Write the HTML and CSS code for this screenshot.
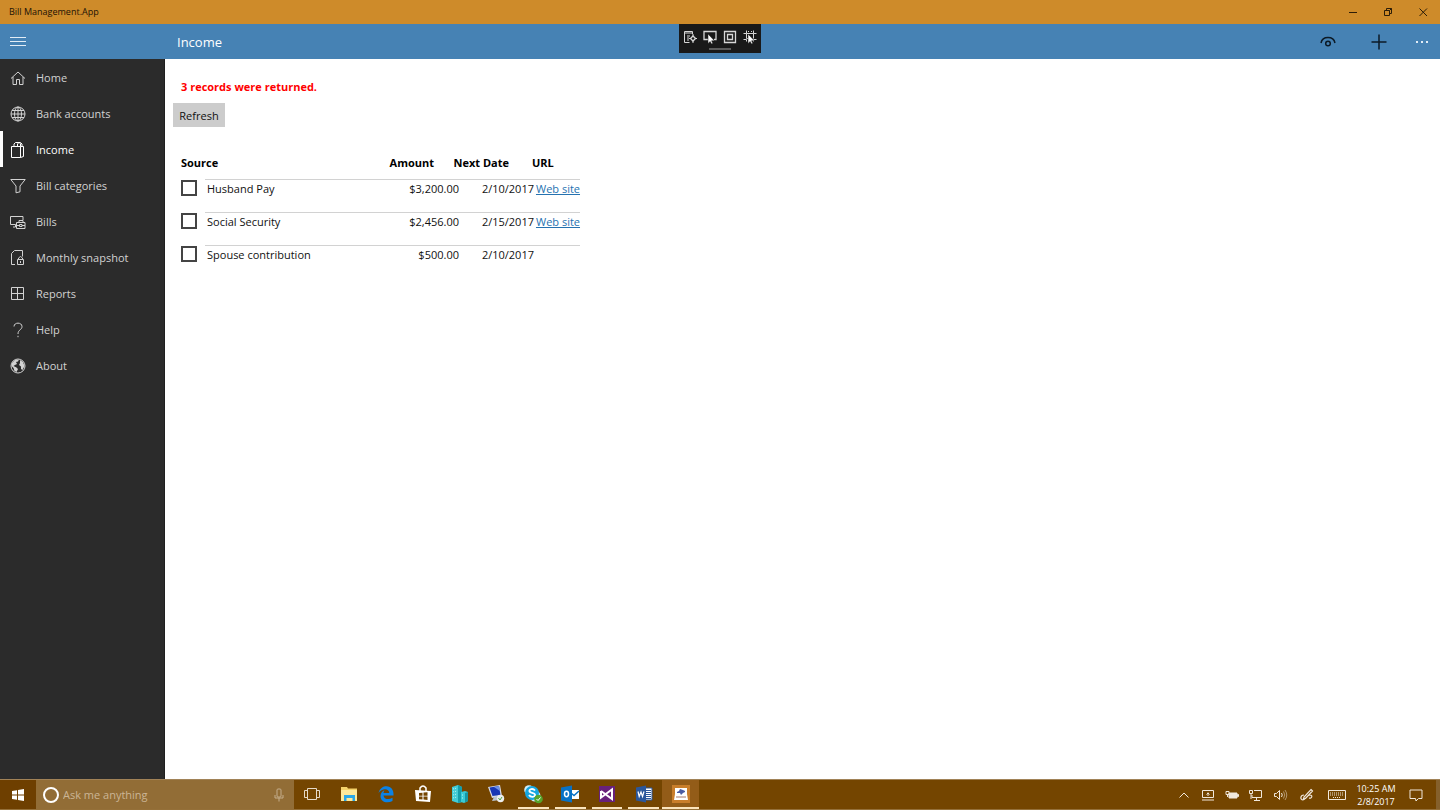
FILE: index.html
```html
<!DOCTYPE html>
<html lang="en">
<head>
<meta charset="utf-8">
<title>Bill Management.App</title>
<link rel="stylesheet" href="styles.css">
</head>
<body>
<div class="titlebar">
  <span class="app-name">Bill Management.App</span>
  <div class="window-buttons">
    <button aria-label="Minimize"><svg width="10" height="10" viewBox="0 0 10 10"><path d="M1 5.500h8"/></svg></button>
    <button aria-label="Restore"><svg width="10" height="10" viewBox="0 0 10 10"><path d="M1.500 3.500h5v5h-5zM3.500 3v-1.500h5v5h-1.500M6.500 3.500l2-2"/></svg></button>
    <button aria-label="Close"><svg width="10" height="10" viewBox="0 0 10 10"><path d="M1.500 1.500l7.500 7.500M9 1.500l-7.500 7.500"/></svg></button>
  </div>
</div>
<header class="header">
  <button class="menu-button" aria-label="Menu"><svg width="16" height="12" viewBox="0 0 16 12"><path d="M0 1.500h16M0 5.500h16M0 9.500h16"/></svg></button>
  <h1>Income</h1>
  <div class="commands">
    <button aria-label="View"><svg width="18" height="18" viewBox="0 0 18 18"><path d="M2 10C3.500 2.800 14.500 2.800 16 10"/><circle cx="9" cy="10.500" r="2.300"/></svg></button>
    <button aria-label="Add"><svg width="18" height="18" viewBox="0 0 18 18"><path d="M9 1.500v15M1.500 9h15"/></svg></button>
    <button class="more" aria-label="More"><svg width="14" height="4" viewBox="0 0 14 4"><path d="M1 1h2v2H1zM6 1h2v2H6zM11 1h2v2h-2z"/></svg></button>
  </div>
</header>
<div class="debug-bar">
  <div class="debug-icons">
    <button aria-label="Go to live visual tree"><svg width="14" height="14" viewBox="0 0 14 14"><path d="M6.500 12.500h-5v-11h8V4M1.500 3h8M4 6h3M4 8h2M4 10h2M10 4v2M10 11v2M6 8.500h1.500M12.500 8.500H14"/><path stroke-width="1.400" d="M10 6l2.500 2.500L10 11 7.500 8.500z"/></svg></button>
    <button aria-label="Enable selection"><svg width="14" height="14" viewBox="0 0 14 14"><path stroke-width="1.300" d="M5 9.500H1v-8h12v8h-2"/><path class="solid" d="M5 4v9.500l2.200-2 1.300 2.500 1.300-.7-1.200-2.500H11.500z"/></svg></button>
    <button aria-label="Display layout adorners"><svg width="14" height="14" viewBox="0 0 14 14"><path stroke-width="1.300" d="M1.500 1.500h11v11h-11zM4.500 4.500h5v5h-5z"/></svg></button>
    <button aria-label="Track focused element"><svg width="14" height="14" viewBox="0 0 14 14"><path d="M3.500 3.500h7v5M5 8.500H3.500v-5M.5 3.500h3v-3M13.500 3.500h-3v-3M.5 9.500h3v2M13.500 9.500h-3v2M5 1.500h1M8 1.500h1"/><path class="solid" d="M5 4v9.500l2.200-2 1.300 2.500 1.300-.7-1.200-2.500H11.500z"/></svg></button>
  </div>
  <span class="debug-grip"></span>
</div>
<div class="body">
  <nav class="sidebar">
    <a href="#home"><svg viewBox="0 0 16 16"><path d="M1 8.500L8 2l7 6.500M3 7v7.500h3.500V9.500h3v5H13V7"/></svg>Home</a>
    <a href="#accounts"><svg viewBox="0 0 16 16"><circle cx="8" cy="8" r="7"/><ellipse cx="8" cy="8" rx="3.500" ry="7"/><path d="M1 8h14M2 4.500h12M2 11.500h12M8 1v14"/></svg>Bank accounts</a>
    <a href="#income" class="current" aria-current="page"><svg viewBox="0 0 16 16"><path d="M1.500 4.500h9v11h-9zM10.500 4.500h3v10l-3 1M4 4.500V2l1.500-1.500h4L10.500 2v2.500M7.500 4.500V2L9 .5h1.500L12 2v2.500"/></svg>Income</a>
    <a href="#categories"><svg viewBox="0 0 16 16"><path d="M.8 1.500h14.400L10 8v5.800l-4 1V8z"/></svg>Bill categories</a>
    <a href="#bills"><svg viewBox="0 0 16 16"><path d="M5.500 10.500H.5v-8h12.500v3.500M3 13h2.500v-2.500M6.500 8.500h8.500v6H6.500zM9 8.500V6.500h4v2M6.500 11.500h3M12 11.500h3M9.500 10.500h2.500v2H9.500z"/></svg>Bills</a>
    <a href="#snapshot"><svg viewBox="0 0 16 16"><path d="M5 14.500H1.500V3.500l3-3h8v6M7.500 9.500h6v5h-6zM8.500 9.500V8q2-3 4 0v1.500M10.500 11v2"/></svg>Monthly snapshot</a>
    <a href="#reports"><svg viewBox="0 0 16 16"><path d="M1.500 1.500h12v12h-12zM7.500 1.500v12M1.500 7.500h12"/></svg>Reports</a>
    <a href="#help"><svg viewBox="0 0 16 16"><path d="M4 4.500C4 0 12 0 12 4.500 12 8 8 7.500 8 12M8 13.800v1.400"/></svg>Help</a>
    <a href="#about"><svg viewBox="0 0 16 16"><circle cx="8" cy="8" r="7"/><path class="solid" d="M2 5l3-3 4-.5-1 2-2 .5 1 2-2 1-1.500 1 3 1.500 1.500 1.500-1.500 3-2-1-1-3-2-2zM10 2l3 2 1.500 4-2 4-1.500-1V8.500L9 7l1-2z"/></svg>About</a>
  </nav>
  <main class="content">
    <p class="message">3 records were returned.</p>
    <button class="refresh">Refresh</button>
    <table class="income">
      <colgroup><col class="c-check"><col class="c-source"><col class="c-amount"><col class="c-gap"><col class="c-date"><col class="c-gap"><col class="c-url"></colgroup>
      <thead>
        <tr><th colspan="2">Source</th><th class="num">Amount</th><th class="num" colspan="2">Next Date</th><th class="url" colspan="2">URL</th></tr>
      </thead>
      <tbody>
        <tr><td class="check"><input type="checkbox" id="r1"></td><td><label for="r1">Husband Pay</label></td><td class="num" colspan="2">$3,200.00</td><td class="num" colspan="2">2/10/2017</td><td class="num"><a href="#site1">Web site</a></td></tr>
        <tr><td class="check"><input type="checkbox" id="r2"></td><td><label for="r2">Social Security</label></td><td class="num" colspan="2">$2,456.00</td><td class="num" colspan="2">2/15/2017</td><td class="num"><a href="#site2">Web site</a></td></tr>
        <tr><td class="check"><input type="checkbox" id="r3"></td><td><label for="r3">Spouse contribution</label></td><td class="num" colspan="2">$500.00</td><td class="num" colspan="2">2/10/2017</td><td></td></tr>
      </tbody>
    </table>
  </main>
</div>
<footer class="taskbar">
  <button class="start" aria-label="Start"><svg width="14" height="14" viewBox="0 0 14 14" fill="#fff"><path d="M1 3l5-.8v4.300H1zM7 2l6-1v5.500H7zM1 7.500h5v4.300L1 11zM7 7.500h6V13l-6-1z"/></svg></button>
  <div class="search">
    <svg width="18" height="18" viewBox="0 0 18 18" fill="none" stroke="#fff" stroke-width="2"><circle cx="9" cy="9" r="7"/></svg>
    <input type="text" placeholder="Ask me anything" aria-label="Ask me anything">
    <svg width="12" height="14" viewBox="0 0 12 14" fill="none" stroke="#c4ae8c"><rect x="4" y="1" width="4" height="8" rx="1"/><path d="M2 7v3h8V7M6 10v3.500"/></svg>
  </div>
  <div class="apps">
    <button aria-label="Task view"><svg viewBox="0 0 20 20" fill="none" stroke="#e6dac9"><path d="M5.500 4.500h9v11h-9zM5 6.500H2.500v7H5M15 6.500h2.500v7H15"/></svg></button>
    <button aria-label="File Explorer"><svg viewBox="0 0 20 20"><path fill="#f5d36b" d="M2 3h6l1 1.500h9V16H2z"/><path fill="#ffe99a" d="M2 6h16v11H2z"/><path fill="#2ba8e8" d="M5 11h11v6h-2.500v-3h-6v3H5z"/></svg></button>
    <button aria-label="Edge"><svg viewBox="0 0 20 20"><path fill="#0b82e4" d="M2.500 9C4 3.500 8 2 10.500 2.200 15 2.200 18 6 17.500 11.500H7.500c.3 4 5.500 4.500 9 2.300v3.200c-5 2.500-12 1.500-12-5 0-3 2-5 4-5.700C7.800 7 7.500 8.500 7.500 9h5.800C13 4 6 4 2.500 9z"/></svg></button>
    <button aria-label="Store"><svg viewBox="0 0 20 20"><path fill="none" stroke="#fff" stroke-width="1.500" d="M7 7V4q3-4 6 0v3"/><path fill="#fff" d="M2 6l16 1-1 11-14-1z"/><path fill="#744500" d="M6 9l3.500-.3v3H6zM10.500 8.600l4-.3v3.400h-4zM6 12.500h3.500v3L6 15.200zM10.500 12.500h4V16l-4-.4z"/></svg></button>
    <button aria-label="Server"><svg viewBox="0 0 20 20"><path fill="#41ccd6" d="M2 3l6-2 4 2v15l-4 1-6-2z"/><path fill="#159eac" d="M8 1l4 2v15l-4 1z"/><path fill="#38cad5" d="M11 8l4-1 3 1v9l-4 2-3-1z"/><path fill="#1797a3" d="M15 9l3-1v9l-3 1.500z"/><path stroke="#c0f5f4" stroke-dasharray="1 1" fill="none" d="M3 5l4-1M3 8l4-1M3 11l4-1M3 14l4-1M12 11h2M12 14h2"/></svg></button>
    <button aria-label="Remote Desktop"><svg viewBox="0 0 20 20"><path fill="#d8dce5" d="M2 3l12-2 2 11-10 2z"/><path fill="#1837b5" d="M3.500 3.500l9.500-1.500 1.500 9-8 1z"/><path fill="#6c91e7" d="M8 3l5-1 1 5z"/><path fill="#bbc6d3" d="M8 13l4-1 2 4-8 1z"/><circle cx="14.500" cy="14.500" r="3.700" fill="#eee"/><path d="M12.500 14l1.500 2 2-3" stroke="#49a54a" fill="none"/></svg></button>
    <button class="open" aria-label="Skype"><svg viewBox="0 0 20 20"><circle cx="6" cy="6" r="4.800" fill="#cceefe"/><circle cx="12" cy="12" r="5.500" fill="#cceefe"/><circle cx="9" cy="9" r="7" fill="#16a6df"/><path d="M12 6.500C10 4 5.500 5 6.500 7.500c.8 1.700 5 1 5.500 3 .5 3-4.500 3-6 .5" stroke="#fff" stroke-width="1.800" fill="none"/><circle cx="15.500" cy="15" r="4.300" fill="#55a52b"/><path d="M13.500 15l1.500 1.500 2.500-3" stroke="#fff" fill="none"/></svg></button>
    <button class="open" aria-label="Outlook"><svg viewBox="0 0 20 20"><path fill="#fff" d="M11 6h8v9h-8z"/><path stroke="#0872c5" stroke-width="1.500" fill="none" d="M11 9l3 2.500L19 7"/><path fill="#0872c5" d="M1 3.500L12 1.500v17L1 16.500z"/><ellipse cx="6.500" cy="10" rx="2" ry="2.700" stroke="#fff" stroke-width="1.500" fill="none"/></svg></button>
    <button class="open" aria-label="Visual Studio"><svg viewBox="0 0 20 20"><path fill="#68217a" d="M2 2h16v16H2z"/><path d="M4 7v6.500l11-8v9.500L4 7" stroke="#fff" stroke-width="2" fill="none"/></svg></button>
    <button class="open" aria-label="Word"><svg viewBox="0 0 20 20"><path fill="#fff" stroke="#2b579a" d="M11 4h7v12h-7z"/><path stroke="#2b579a" d="M12 6.500h5M12 8.500h5M12 10.500h5M12 12.500h5M12 14.500h5"/><path fill="#2b579a" d="M2 3.500L12 1.500v17L2 16.500z"/><path d="M4 7.500l1.200 5L7 8l1.500 4.500 1.500-5" stroke="#fff" stroke-width="1.200" fill="none"/></svg></button>
    <button class="open active" aria-label="Bill Management"><svg viewBox="0 0 20 20"><path fill="#c97e2b" d="M1 1h18v18H1z"/><path fill="#fff" d="M4 4h12v6l1 6H3l1-6z"/><path fill="#4b5ca3" d="M6 8l2-1 1-2 3 1 2 1v1l-2 1-2 2-1-2H6z"/><path stroke="#a6786b" d="M5 13h10"/></svg></button>
  </div>
  <div class="tray">
    <svg width="24" height="16" viewBox="0 0 24 16"><path d="M7.500 10.500L12 6l4.500 4.500"/></svg>
    <svg width="24" height="16" viewBox="0 0 24 16"><path d="M6.500 3.500h11v7h-11zM6 13h12M12 9V5.500M10.500 7.500L12 6l1.500 1.500"/></svg>
    <svg width="24" height="16" viewBox="0 0 24 16"><path fill="#f1e8dc" d="M9 6h8v5H9zM17.500 7.500h1v2h-1z"/><path d="M6 4.500h3v3H6zM7.500 8v2"/></svg>
    <svg width="24" height="16" viewBox="0 0 24 16"><path d="M10 3.500h7.500v7H8V8M12.500 10.500v3M10 13.500h6M5.500 3.500h3v3h-3zM7 7v5"/></svg>
    <svg width="24" height="16" viewBox="0 0 24 16"><path d="M6.500 6.500h2l3-3v9l-3-3h-2zM13.500 6q1.500 2 0 4"/><path opacity=".5" d="M15.500 4.500q2.500 3.500 0 7M17 3q3.500 5 0 10"/></svg>
    <svg width="30" height="16" viewBox="0 0 30 16"><path stroke-width="1.200" d="M19 2.500l1.500 1.500-7 7.500-2 .5.500-2zM12 8c-4 0-4 5-1 5s3-5 7-5c3 0 2 4-1 3"/></svg>
    <svg width="30" height="16" viewBox="0 0 30 16"><path d="M6.500 3.500h17v9h-17z"/><path stroke-dasharray="1 1" d="M8 6h14M8 8h14M11 10.500h8"/></svg>
    <time datetime="2017-02-08T10:25"><span>10:25 AM</span><span>2/8/2017</span></time>
    <button aria-label="Notifications"><svg width="14" height="14" viewBox="0 0 14 14"><path d="M1 2h12v8.500H9.500L7 13l-.5-2.500H1z"/></svg></button>
  </div>
</footer>
</body>
</html>
```
FILE: styles.css
```css
* { box-sizing: border-box; }
body {
  margin: 0;
  min-height: 100vh;
  display: flex;
  flex-direction: column;
  background: #fff;
  color: #111;
  font: 11px/16px "Open Sans", "Noto Sans", sans-serif;
}
button {
  display: flex;
  align-items: center;
  justify-content: center;
  padding: 0;
  border: 0;
  background: none;
  font: inherit;
  color: inherit;
}
svg { display: block; flex: none; }
.titlebar {
  height: 24px;
  display: flex;
  align-items: center;
  justify-content: space-between;
  padding-left: 9px;
  background: #ce8b2a;
  color: #1c1206;
}
.app-name { font-size: 9px; }
.window-buttons { display: flex; height: 100%; }
.window-buttons button { width: 35px; }
.window-buttons svg { fill: none; stroke: #2c1d08; }
.header {
  height: 35px;
  display: flex;
  align-items: center;
  background: #4682b4;
  color: #fff;
}
.menu-button { width: 36px; height: 100%; }
.menu-button svg { stroke: #e2edf6; }
.header h1 {
  flex: 1;
  margin: 0;
  padding-left: 141px;
  font-size: 13px;
  line-height: 18px;
  font-weight: 400;
}
.commands { display: flex; height: 100%; }
.commands button { width: 51px; }
.commands svg { fill: none; stroke: #0c1a26; stroke-width: 1.5; }
.commands .more { width: 36px; }
.commands .more svg { fill: #e2edf6; stroke: none; }
.debug-bar {
  position: absolute;
  top: 24px;
  left: 50%;
  transform: translateX(-50%);
  width: 82px;
  height: 29px;
  padding: 6px 0 3px;
  display: flex;
  flex-direction: column;
  justify-content: space-between;
  align-items: center;
  background: #191919;
}
.debug-icons { display: flex; gap: 6px; }
.debug-icons svg { fill: none; stroke: #d6d6d6; }
.debug-icons .solid { fill: #fff; stroke: #191919; stroke-width: .5; }
.debug-grip { width: 22px; height: 2px; background: #5c5c5c; }
.body { flex: 1; display: flex; }
.sidebar {
  width: 165px;
  background: #2b2b2b;
  border-right: 1px solid #1f1f1f;
}
.sidebar a {
  display: flex;
  align-items: center;
  gap: 10px;
  height: 36px;
  padding: 2px 0 0 7px;
  border-left: 3px solid transparent;
  color: #d2d2d2;
  text-decoration: none;
}
.sidebar .current { border-color: #fff; color: #fff; }
.sidebar svg { width: 16px; height: 16px; fill: none; stroke: currentColor; }
.sidebar .solid { fill: currentColor; stroke: none; }
.content { flex: 1; padding: 20px 8px; }
.message { margin: 0 0 8px; padding-left: 8px; color: #f00; font-weight: 700; }
.refresh { width: 52px; height: 24px; padding-top: 2px; background: #ccc; }
.income {
  width: 399px;
  margin: 24px 0 0 8px;
  table-layout: fixed;
  border-collapse: separate;
  border-spacing: 0;
  white-space: nowrap;
}
.c-check { width: 24px; }
.c-source { width: 175px; }
.c-amount { width: 54px; }
.c-gap { width: 25px; }
.c-date { width: 50px; }
.c-url { width: 46px; }
.income th { height: 28px; padding: 4px 0 8px; text-align: left; vertical-align: top; color: #000; }
.income td { height: 33px; padding: 1px 0 0; vertical-align: top; border-top: 1px solid #d2d2d2; }
.income td:nth-child(2) { padding-left: 2px; }
.income .check { padding-top: 0; border-top-color: transparent; }
.income .num { text-align: right; }
.income .url { padding-left: 23px; }
.income a { color: #2672b0; }
.income input {
  appearance: none;
  display: block;
  width: 16px;
  height: 16px;
  margin: 0;
  border: 2px solid #444;
  background: #fff;
}
.taskbar {
  height: 31px;
  display: flex;
  border-top: 1px solid #a18257;
  border-bottom: 1px solid #957039;
  background: #744500;
  color: #fff;
}
.start { width: 36px; background: #6e3f00; }
.search {
  width: 258px;
  display: flex;
  align-items: center;
  padding: 0 9px 0 6px;
  gap: 3px;
  background: #926d36;
}
.search input {
  flex: 1;
  min-width: 0;
  padding: 0;
  border: 0;
  outline: 0;
  background: none;
  font: inherit;
  color: #fff;
}
.search input::placeholder { color: #cbb595; opacity: 1; }
.apps { display: grid; grid-template-columns: repeat(11, 1fr); width: 405px; }
.apps button { border-bottom: 2px solid transparent; }
.apps svg { width: 20px; height: 20px; }
.apps .open { margin: 0 3px; border-bottom-color: #fbe4bd; }
.apps .active { margin: 0; background: #935c18; }
.tray {
  margin-left: auto;
  display: flex;
  align-items: center;
  padding-right: 4px;
  border-right: 4px solid #85602b;
}
.tray svg { fill: none; stroke: #f1e8dc; }
.tray time {
  display: flex;
  flex-direction: column;
  align-items: center;
  width: 48px;
  font-size: 9px;
  line-height: 13px;
}
.tray button { width: 32px; height: 100%; }
```
